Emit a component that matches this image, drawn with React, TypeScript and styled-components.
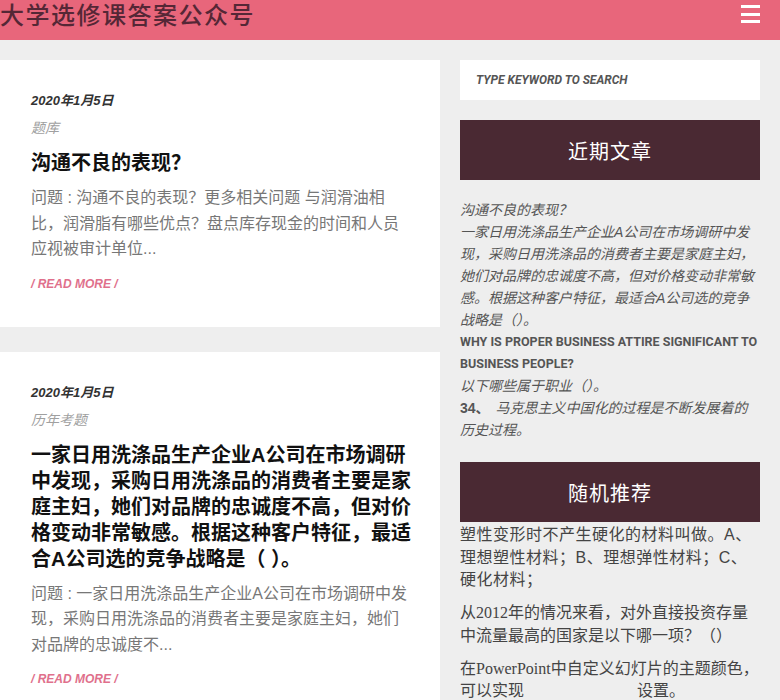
import styled, { createGlobalStyle } from "styled-components";

const GlobalStyle = createGlobalStyle`
  html, body {
    margin: 0;
    padding: 0;
    background: #eeeeee;
    font-family: "Noto Sans", "Noto Sans CJK SC", sans-serif;
  }
  * { box-sizing: border-box; }
`;

const cjk = `"Liberation Sans", "Noto Sans CJK SC", sans-serif`;

const Header = styled.header`
  height: 40px;
  background: #e8667b;
  display: flex;
  align-items: center;
  justify-content: space-between;
  padding: 0 20px 0 0;
`;

const SiteTitle = styled.h1`
  margin: 0;
  margin-top: -8px;
  font-family: ${cjk};
  font-size: 24px;
  font-weight: 500;
  letter-spacing: 1.5px;
  color: #552736;
  line-height: 32px;
`;

const Burger = styled.button`
  width: 19px;
  height: 18px;
  margin-top: -12px;
  padding: 0;
  border: 0;
  background: none;
  display: flex;
  flex-direction: column;
  justify-content: space-between;
  span {
    display: block;
    height: 3px;
    background: #fff;
  }
`;

const Layout = styled.div`
  display: grid;
  grid-template-columns: 440px 300px;
  column-gap: 20px;
  padding-top: 20px;
  align-items: start;
`;

const Main = styled.main`
  display: flex;
  flex-direction: column;
  gap: 25px;
`;

const Card = styled.article`
  background: #fff;
  padding: 32px 29px 35px 31px;
  display: flex;
  flex-direction: column;
`;

const PostDate = styled.div`
  font-family: ${cjk};
  font-size: 13px;
  font-weight: 700;
  font-style: italic;
  line-height: 18px;
  color: #333;
`;

const Category = styled.div`
  margin-top: 9px;
  font-family: ${cjk};
  font-size: 14px;
  font-style: italic;
  line-height: 18px;
  color: #a0a0a0;
`;

const PostTitle = styled.h2`
  margin: 13px 0 0;
  font-family: ${cjk};
  font-size: 20px;
  font-weight: 600;
  line-height: 26px;
  color: #111;
`;

const Excerpt = styled.p`
  margin: 9px 0 0;
  font-family: ${cjk};
  font-size: 16px;
  line-height: 25.5px;
  color: #777;
`;

const ReadMore = styled.a`
  margin-top: 14px;
  font-family: "Liberation Sans", sans-serif;
  font-size: 12px;
  font-weight: 700;
  font-style: italic;
  line-height: 16px;
  color: #e0708c;
  text-decoration: none;
`;

const Sidebar = styled.aside`
  display: flex;
  flex-direction: column;
`;

const Search = styled.input`
  height: 40px;
  border: 0;
  background: #fff;
  padding: 0 16px;
  font-family: Roboto, "Liberation Sans", sans-serif;
  font-size: 12px;
  font-weight: 700;
  font-style: italic;
  outline: none;
  &::placeholder {
    color: #555;
  }
`;

const WidgetTitle = styled.h3<{ $top: number }>`
  margin: ${(p) => p.$top}px 0 0;
  height: 60px;
  background: #4a2933;
  color: #fff;
  display: flex;
  align-items: center;
  justify-content: center;
  font-family: ${cjk};
  font-size: 20px;
  font-weight: 400;
  letter-spacing: 1px;
`;

const RecentList = styled.ul`
  list-style: none;
  margin: 19px 0 0;
  padding: 0;
`;

const RecentItem = styled.li<{ $latin?: boolean }>`
  font-family: ${(p) => (p.$latin ? `Roboto, "Liberation Sans", sans-serif` : cjk)};
  font-size: ${(p) => (p.$latin ? "12.5px" : "14px")};
  font-style: ${(p) => (p.$latin ? "normal" : "italic")};
  font-weight: ${(p) => (p.$latin ? 700 : 400)};
  line-height: 22px;
  color: #555;
  b {
    font-style: normal;
    margin-right: 6px;
  }
`;

const RandomList = styled.ul`
  list-style: none;
  margin: 2px 0 0;
  padding: 0;
  display: flex;
  flex-direction: column;
  gap: 10.5px;
`;

const RandomItem = styled.li<{ $spacing?: number }>`
  font-family: ${cjk};
  font-size: 16px;
  line-height: 22.5px;
  letter-spacing: ${(p) => p.$spacing ?? 0}px;
  color: #444;
`;

const SerifRun = styled.span`
  font-family: "Liberation Serif", "Noto Sans CJK SC", serif;
`;

const Blank = styled.span`
  display: inline-block;
  width: 113px;
`;

export default function App() {
  return (
    <>
      <GlobalStyle />
      <Header>
        <SiteTitle>大学选修课答案公众号</SiteTitle>
        <Burger aria-label="menu">
          <span />
          <span />
          <span />
        </Burger>
      </Header>
      <Layout>
        <Main>
          <Card>
            <PostDate>2020年1月5日</PostDate>
            <Category>题库</Category>
            <PostTitle>沟通不良的表现？</PostTitle>
            <Excerpt>
              问题 : 沟通不良的表现？更多相关问题 与润滑油相比，润滑脂有哪些优点？盘点库存现金的时间和人员应视被审计单位...
            </Excerpt>
            <ReadMore href="#">/ READ MORE /</ReadMore>
          </Card>
          <Card>
            <PostDate>2020年1月5日</PostDate>
            <Category>历年考题</Category>
            <PostTitle>
              一家日用洗涤品生产企业A公司在市场调研中发现，采购日用洗涤品的消费者主要是家庭主妇，她们对品牌的忠诚度不高，但对价格变动非常敏感。根据这种客户特征，最适合A公司选的竞争战略是（ ）。
            </PostTitle>
            <Excerpt>
              问题 : 一家日用洗涤品生产企业A公司在市场调研中发现，采购日用洗涤品的消费者主要是家庭主妇，她们对品牌的忠诚度不...
            </Excerpt>
            <ReadMore href="#">/ READ MORE /</ReadMore>
          </Card>
        </Main>
        <Sidebar>
          <Search placeholder="TYPE KEYWORD TO SEARCH" />
          <WidgetTitle $top={20}>近期文章</WidgetTitle>
          <RecentList>
            <RecentItem>沟通不良的表现？</RecentItem>
            <RecentItem>
              一家日用洗涤品生产企业A公司在市场调研中发现，采购日用洗涤品的消费者主要是家庭主妇，她们对品牌的忠诚度不高，但对价格变动非常敏感。根据这种客户特征，最适合A公司选的竞争战略是（）。
            </RecentItem>
            <RecentItem $latin>WHY IS PROPER BUSINESS ATTIRE SIGNIFICANT TO BUSINESS PEOPLE?</RecentItem>
            <RecentItem>以下哪些属于职业（）。</RecentItem>
            <RecentItem>
              <b>34、</b>马克思主义中国化的过程是不断发展着的历史过程。
            </RecentItem>
          </RecentList>
          <WidgetTitle $top={21}>随机推荐</WidgetTitle>
          <RandomList>
            <RandomItem $spacing={0.5}>
              塑性变形时不产生硬化的材料叫做。A、理想塑性材料；B、理想弹性材料；C、硬化材料；
            </RandomItem>
            <RandomItem>
              从<SerifRun>2012</SerifRun>年的情况来看，对外直接投资存量中流量最高的国家是以下哪一项？（）
            </RandomItem>
            <RandomItem>
              在<SerifRun>PowerPoint</SerifRun>中自定义幻灯片的主题颜色，可以实现<Blank />设置。
            </RandomItem>
          </RandomList>
        </Sidebar>
      </Layout>
    </>
  );
}
